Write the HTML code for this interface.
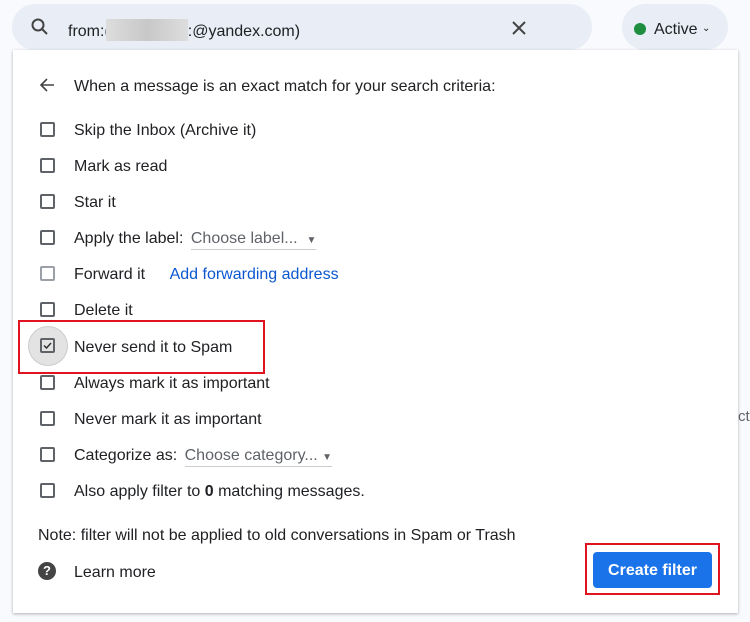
<!DOCTYPE html>
<html><head><meta charset="utf-8"><style>
*{margin:0;padding:0;box-sizing:border-box}
body{width:750px;height:622px;background:#f8fafd;font-family:"Liberation Sans",sans-serif;color:#202124;position:relative;overflow:hidden;font-size:16px}
.abs{position:absolute}
.search{left:12px;top:4px;width:580px;height:46px;background:#e9eef6;border-radius:23px}
.active{left:622px;top:4px;width:106px;height:46px;background:#e9eef6;border-radius:23px}
.panel{left:13px;top:50px;width:725px;height:563px;background:#fff;box-shadow:0 1px 3px rgba(0,0,0,.3)}
.row{position:absolute;left:74px;font-size:16px;color:#202124;line-height:20px;margin-top:2px}
.cb{position:absolute;left:40px;width:15px;height:15px;border:2px solid #5f6368;border-radius:2px}
.red{position:absolute;border:2px solid #e0141e}
</style></head><body>
<div class="abs search"></div>
<svg class="abs" style="left:30px;top:17px" width="20" height="20" viewBox="0 0 20 20"><circle cx="8" cy="8" r="5.5" fill="none" stroke="#444" stroke-width="2"/><path d="M12 12l5 5" stroke="#444" stroke-width="2"/></svg>
<div class="abs" style="left:68px;top:19px;font-size:16px;color:#202124">from:(<span style="display:inline-block;width:82px;height:22px;background:linear-gradient(90deg,#ddd,#c8c8c8,#ddd);vertical-align:-5px;margin-left:-4px"></span>:@yandex.com)</div>
<svg class="abs" style="left:511px;top:20px" width="16" height="16" viewBox="0 0 16 16"><path d="M2 2l12 12M14 2L2 14" stroke="#444" stroke-width="2"/></svg>
<div class="abs active"></div>
<div class="abs" style="left:634px;top:23px;width:12px;height:12px;border-radius:50%;background:#1e8e3e"></div>
<div class="abs" style="left:654px;top:21px;font-size:16px">Active <span style="font-size:10px;vertical-align:3px">⌄</span></div>
<div class="abs panel"></div>
<svg class="abs" style="left:39px;top:77px" width="16" height="16" viewBox="0 0 16 16"><path d="M15 8H2M8 2L2 8l6 6" fill="none" stroke="#444" stroke-width="1.6"/></svg>
<div class="row" style="top:75px">When a message is an exact match for your search criteria:</div>
<div class="cb" style="top:122px"></div><div class="row" style="top:119px">Skip the Inbox (Archive it)</div>
<div class="cb" style="top:158px"></div><div class="row" style="top:155px">Mark as read</div>
<div class="cb" style="top:194px"></div><div class="row" style="top:191px">Star it</div>
<div class="cb" style="top:230px"></div><div class="row" style="top:227px">Apply the label: <span style="color:#5f6368;margin-left:3px;border-bottom:1px solid #ccc;padding-bottom:2px">Choose label... &nbsp;<span style="font-size:10px">▼</span></span></div>
<div class="cb" style="top:266px;border-color:#9aa0a6"></div><div class="row" style="top:263px">Forward it <span style="color:#0b57d0;margin-left:20px">Add forwarding address</span></div>
<div class="cb" style="top:302px"></div><div class="row" style="top:299px">Delete it</div>
<div class="abs" style="left:28px;top:326px;width:40px;height:40px;border-radius:50%;background:#e3e3e3;border:1px solid #ccc"></div>
<div class="cb" style="top:338px"></div>
<svg class="abs" style="left:42px;top:340px" width="11" height="11" viewBox="0 0 11 11"><path d="M2 5.5l2.5 2.5L9 3" fill="none" stroke="#333" stroke-width="1.5"/></svg>
<div class="row" style="top:336px">Never send it to Spam</div>
<div class="red" style="left:18px;top:320px;width:247px;height:54px"></div>
<div class="cb" style="top:375px"></div><div class="row" style="top:372px">Always mark it as important</div>
<div class="cb" style="top:411px"></div><div class="row" style="top:408px">Never mark it as important</div>
<div class="cb" style="top:447px"></div><div class="row" style="top:444px">Categorize as: <span style="color:#5f6368;margin-left:3px;border-bottom:1px solid #ccc;padding-bottom:2px">Choose category... <span style="font-size:10px">▼</span></span></div>
<div class="cb" style="top:483px"></div><div class="row" style="top:480px">Also apply filter to <b>0</b> matching messages.</div>
<div class="row" style="left:38px;top:524px">Note: filter will not be applied to old conversations in Spam or Trash</div>
<div class="abs" style="left:38px;top:562px;width:18px;height:18px;border-radius:50%;background:#444;color:#fff;font-size:13px;font-weight:bold;text-align:center;line-height:18px">?</div>
<div class="row" style="top:561px">Learn more</div>
<div class="abs" style="left:593px;top:552px;width:119px;height:36px;background:#1a73e8;border-radius:4px;color:#fff;font-size:16px;font-weight:bold;text-align:center;line-height:37px">Create filter</div>
<div class="red" style="left:585px;top:543px;width:135px;height:52px"></div>
<div class="abs" style="left:738px;top:408px;color:#5f6368;font-size:15px">ct</div>
</body></html>
